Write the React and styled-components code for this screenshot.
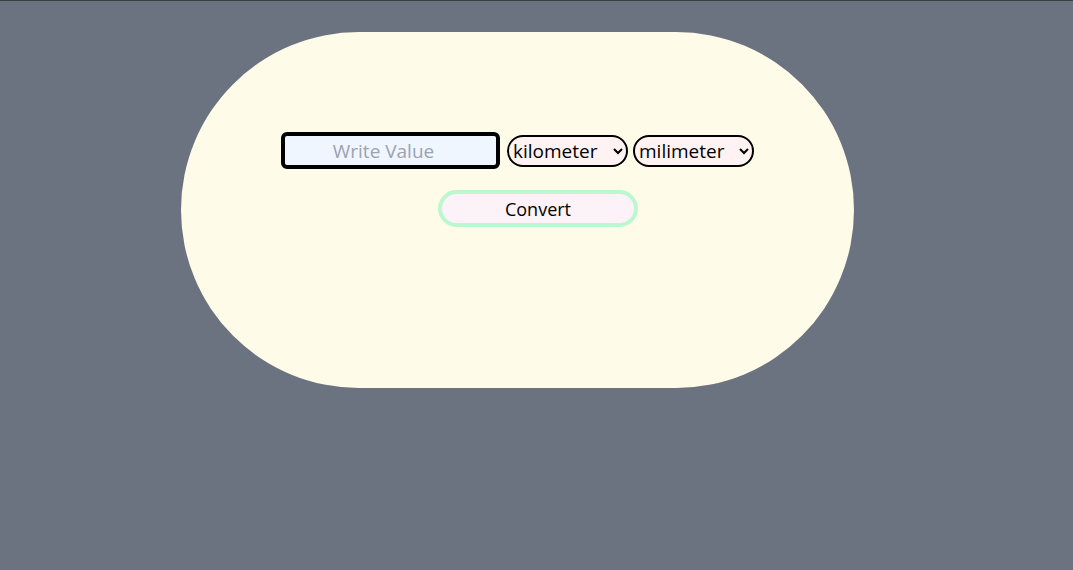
import { useState } from "react";
import styled, { createGlobalStyle } from "styled-components";

const GlobalStyle = createGlobalStyle`
  html, body {
    margin: 0;
    padding: 0;
    background: #6b7280;
    font-family: "Open Sans", "Noto Sans", sans-serif;
  }
  body {
    border-top: 1px solid #3a3f45;
    min-height: 569px;
  }
`;

const Page = styled.main`
  padding-top: 31px;
  padding-left: 181px;
`;

const Card = styled.section`
  box-sizing: border-box;
  width: 673px;
  height: 356px;
  border-radius: 178px;
  background: #fefce8;
  padding-top: 100px;
  padding-left: 100px;
`;

const Row = styled.div`
  display: flex;
  align-items: center;
`;

const ValueInput = styled.input`
  box-sizing: border-box;
  width: 219px;
  height: 37px;
  border: 4px solid #000;
  border-radius: 6px;
  background: #eff6ff;
  font-family: inherit;
  font-size: 19px;
  text-align: center;
  padding: 0 14px 0 0;
  outline: none;
  &::placeholder {
    color: #9ca3af;
  }
`;

const UnitSelect = styled.select`
  box-sizing: border-box;
  width: 121px;
  height: 32px;
  margin-left: ${props => props.$gap}px;
  border: 2px solid #000;
  border-radius: 999px;
  background: #fef2f2;
  color: #000;
  font-family: inherit;
  font-size: 19px;
  padding: 0;
  outline: none;
`;

const ConvertButton = styled.button`
  box-sizing: border-box;
  display: block;
  width: 200px;
  height: 37px;
  margin: 21px 0 0 157px;
  border: 4px solid #bbf7d0;
  border-radius: 999px;
  background: #fdf2f8;
  color: #000;
  font-family: inherit;
  font-size: 18px;
  cursor: pointer;
`;

const units = ["kilometer", "meter", "centimeter", "milimeter"];

export default function App() {
  const [value, setValue] = useState("");
  const [from, setFrom] = useState("kilometer");
  const [to, setTo] = useState("milimeter");

  return (
    <>
      <GlobalStyle />
      <Page>
        <Card>
          <Row>
            <ValueInput
              placeholder="Write Value"
              value={value}
              onChange={e => setValue(e.target.value)}
            />
            <UnitSelect $gap={7} value={from} onChange={e => setFrom(e.target.value)}>
              {units.map(u => (
                <option key={u} value={u}>{u}</option>
              ))}
            </UnitSelect>
            <UnitSelect $gap={5} value={to} onChange={e => setTo(e.target.value)}>
              {units.map(u => (
                <option key={u} value={u}>{u}</option>
              ))}
            </UnitSelect>
          </Row>
          <ConvertButton type="button">Convert</ConvertButton>
        </Card>
      </Page>
    </>
  );
}
